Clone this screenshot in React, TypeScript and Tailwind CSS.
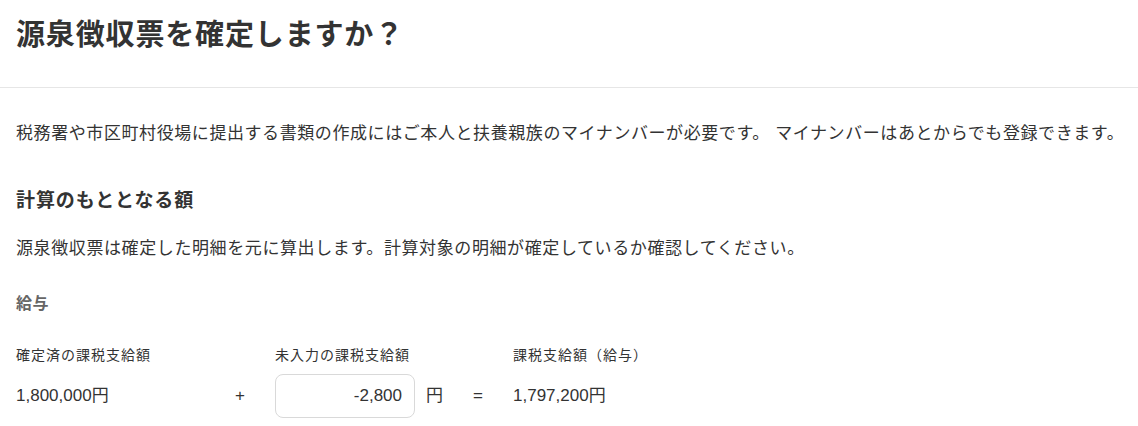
import { useState } from 'react';

const font = 'font-["Liberation_Sans","Noto_Sans_CJK_JP",sans-serif]';

export default function App() {
  const [untaxed, setUntaxed] = useState('-2,800');

  return (
    <div className={`${font} w-[1138px] h-[426px] bg-white text-[#333] overflow-hidden`}>
      <header className="h-[88px] border-b border-[#e6e6e6] px-4 pt-[14px]">
        <h1 className="text-[29px] leading-[42px] font-bold tracking-[0.85px]">源泉徴収票を確定しますか？</h1>
      </header>

      <main className="px-4 pt-[32px]">
        <p className="whitespace-nowrap text-[17px] leading-[28px] tracking-[0.58px]">
          税務署や市区町村役場に提出する書類の作成にはご本人と扶養親族のマイナンバーが必要です。 マイナンバーはあとからでも登録できます。
        </p>

        <h2 className="mt-[39px] text-[19px] leading-[28px] font-bold tracking-[0.9px]">計算のもととなる額</h2>

        <p className="mt-[20px] text-[17px] leading-[28px] tracking-[0.6px]">
          源泉徴収票は確定した明細を元に算出します。計算対象の明細が確定しているか確認してください。
        </p>

        <h3 className="mt-[31px] text-[16px] leading-[20px] font-bold tracking-[0.5px] text-[#666]">給与</h3>

        <div className="mt-[31px] flex text-[14px] leading-[20px] tracking-[1px]">
          <div className="w-[259px]">確定済の課税支給額</div>
          <div className="w-[238px]">未入力の課税支給額</div>
          <div>課税支給額（給与）</div>
        </div>

        <div className="mt-[9px] flex items-center text-[17px]">
          <div className="w-[200px]">1,800,000円</div>
          <div className="w-[48px] text-center">+</div>
          <div className="ml-[11px] flex items-center">
            <input
              value={untaxed}
              onChange={(e) => setUntaxed(e.target.value)}
              className="w-[140px] h-[44px] rounded-[8px] border border-[#d9d9d9] px-[12px] text-right text-[17px] outline-none"
            />
            <span className="ml-[11px]">円</span>
          </div>
          <div className="w-[70px] text-center">=</div>
          <div>1,797,200円</div>
        </div>
      </main>
    </div>
  );
}
